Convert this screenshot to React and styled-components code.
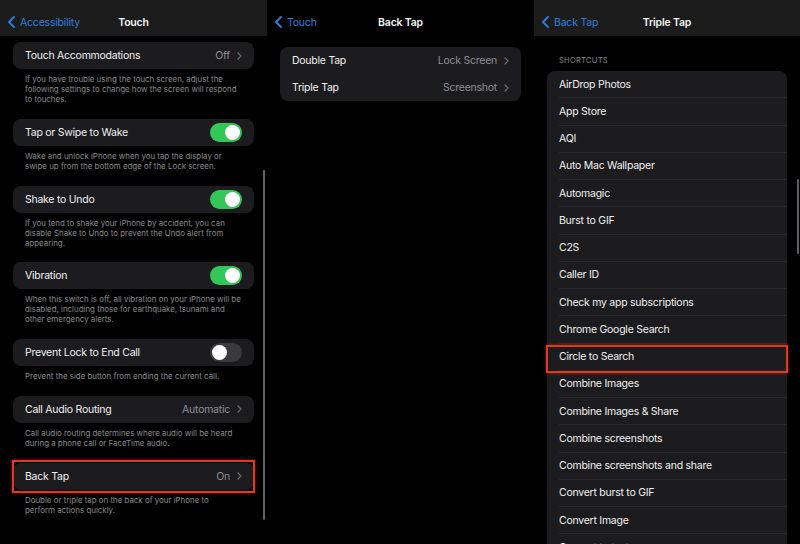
import React from 'react'
import styled, { createGlobalStyle } from 'styled-components'

const GlobalStyle = createGlobalStyle`
  html, body {
    margin: 0;
    padding: 0;
    background: #000;
  }
  body {
    font-family: Inter, "Noto Sans", "Liberation Sans", sans-serif;
    -webkit-font-smoothing: antialiased;
  }
`

const Screens = styled.div`
  display: flex;
  width: 800px;
  height: 544px;
  overflow: hidden;
  background: #000;
`

const Panel = styled.div`
  position: relative;
  display: flex;
  flex-direction: column;
  width: ${p => p.width}px;
  flex-shrink: 0;
  overflow: hidden;
`

const NavBar = styled.div`
  display: grid;
  grid-template-columns: 1fr auto 1fr;
  align-items: center;
  height: 36px;
  padding-top: 8px;
  box-sizing: border-box;
  background: ${p => (p.solid ? '#1c1c1d' : '#000')};
  flex-shrink: 0;
`

const BackLink = styled.div`
  display: flex;
  align-items: center;
  gap: 5px;
  padding-left: 8px;
  color: #2f7fdc;
  font-size: 10.5px;
  letter-spacing: -0.2px;
`

const Title = styled.div`
  color: #f4f4f4;
  font-size: 10.5px;
  font-weight: 600;
  letter-spacing: -0.2px;
`

const Content = styled.div`
  padding: ${p => p.top}px 13px 0;
`

const Card = styled.div`
  position: relative;
  background: #1c1c1e;
  border-radius: 8px;
  &::after {
    content: ${p => (p.marked ? "''" : 'none')};
    position: absolute;
    left: -1px;
    right: -1px;
    top: -3px;
    bottom: -3px;
    border: 2.5px solid #e2381d;
    box-shadow: 0 0 3px rgba(226, 56, 29, 0.6);
  }
`

const Row = styled.div`
  display: flex;
  align-items: center;
  justify-content: space-between;
  height: 27px;
  padding: 0 12px;
  color: #f0f0f0;
  font-size: 10.5px;
  letter-spacing: -0.25px;
`

const Value = styled.span`
  display: flex;
  align-items: center;
  gap: 7px;
  color: #8e8e93;
`

const Footer = styled.p`
  margin: 0;
  padding: 5px ${p => (p.narrow ? 40 : 12)}px 14.8px 12px;
  color: #8a8a8e;
  font-size: 7.9px;
  line-height: 10px;
`

const Track = styled.div`
  position: relative;
  width: 32px;
  height: 19px;
  border-radius: 10px;
  background: ${p => (p.on ? '#33c759' : '#3a3a3c')};
`

const Knob = styled.div`
  position: absolute;
  top: 2px;
  left: ${p => (p.on ? '15px' : '2px')};
  width: 15px;
  height: 15px;
  border-radius: 50%;
  background: #fff;
`

const ScrollIndicator = styled.div`
  position: absolute;
  right: ${p => p.right}px;
  top: ${p => p.top}px;
  width: 2.5px;
  height: ${p => p.length}px;
  border-radius: 2px;
  background: #5f5f63;
`

const SectionHeader = styled.div`
  padding: 0 12px 6px;
  color: #8a8a8e;
  font-size: 7.5px;
  letter-spacing: 0.3px;
`

const ListCard = styled.div`
  background: #1c1c1e;
  border-radius: 8px 8px 0 0;
`

const ShortcutRow = styled.div`
  position: relative;
  height: 27.25px;
  padding-left: 12px;
  color: #f0f0f0;
  font-size: 10.5px;
  letter-spacing: -0.25px;
  &::after {
    content: ${p => (p.marked ? "''" : 'none')};
    position: absolute;
    left: -1px;
    right: -1px;
    top: 1px;
    bottom: -2px;
    border: 2.5px solid #e2381d;
    box-shadow: 0 0 3px rgba(226, 56, 29, 0.6);
  }
`

const ShortcutLabel = styled.div`
  display: flex;
  align-items: center;
  height: 100%;
  box-sizing: border-box;
  border-bottom: 0.5px solid #2a2a2c;
`

const BackChevron = () => (
  <svg width="7" height="12" viewBox="0 0 7 12">
    <path d="M6 1L1 6l5 5" fill="none" stroke="#2f7fdc" strokeWidth="1.8" strokeLinecap="round" strokeLinejoin="round" />
  </svg>
)

const Chevron = () => (
  <svg width="5" height="8" viewBox="0 0 5 8">
    <path d="M1 1l3 3-3 3" fill="none" stroke="#6d6d72" strokeWidth="1.2" strokeLinecap="round" strokeLinejoin="round" />
  </svg>
)

const Toggle = ({ on }) => (
  <Track on={on}>
    <Knob on={on} />
  </Track>
)

const Nav = ({ back, title, solid }) => (
  <NavBar solid={solid}>
    <BackLink>
      <BackChevron />
      {back}
    </BackLink>
    <Title>{title}</Title>
    <div />
  </NavBar>
)

const touchSettings = [
  {
    label: 'Touch Accommodations',
    value: 'Off',
    note: 'If you have trouble using the touch screen, adjust the following settings to change how the screen will respond to touches.'
  },
  {
    label: 'Tap or Swipe to Wake',
    toggle: true,
    note: 'Wake and unlock iPhone when you tap the display or swipe up from the bottom edge of the Lock screen.'
  },
  {
    label: 'Shake to Undo',
    toggle: true,
    note: 'If you tend to shake your iPhone by accident, you can disable Shake to Undo to prevent the Undo alert from appearing.'
  },
  {
    label: 'Vibration',
    toggle: true,
    note: 'When this switch is off, all vibration on your iPhone will be disabled, including those for earthquake, tsunami and other emergency alerts.'
  },
  {
    label: 'Prevent Lock to End Call',
    toggle: false,
    note: 'Prevent the side button from ending the current call.'
  },
  {
    label: 'Call Audio Routing',
    value: 'Automatic',
    note: 'Call audio routing determines where audio will be heard during a phone call or FaceTime audio.'
  },
  {
    label: 'Back Tap',
    value: 'On',
    marked: true,
    narrow: true,
    note: 'Double or triple tap on the back of your iPhone to perform actions quickly.'
  }
]

const shortcuts = [
  'AirDrop Photos',
  'App Store',
  'AQI',
  'Auto Mac Wallpaper',
  'Automagic',
  'Burst to GIF',
  'C2S',
  'Caller ID',
  'Check my app subscriptions',
  'Chrome Google Search',
  'Circle to Search',
  'Combine Images',
  'Combine Images & Share',
  'Combine screenshots',
  'Combine screenshots and share',
  'Convert burst to GIF',
  'Convert Image',
  'Convert to text'
]

const TouchPanel = () => (
  <Panel width={267}>
    <Nav back="Accessibility" title="Touch" solid />
    <Content top={6}>
      {touchSettings.map(item => (
        <div key={item.label}>
          <Card marked={item.marked}>
            <Row>
              {item.label}
              {item.value !== undefined ? (
                <Value>
                  {item.value}
                  <Chevron />
                </Value>
              ) : (
                <Toggle on={item.toggle} />
              )}
            </Row>
          </Card>
          <Footer narrow={item.narrow}>{item.note}</Footer>
        </div>
      ))}
    </Content>
    <ScrollIndicator right={2} top={170} length={350} />
  </Panel>
)

const BackTapPanel = () => (
  <Panel width={267}>
    <Nav back="Touch" title="Back Tap" />
    <Content top={11}>
      <Card>
        <Row>
          Double Tap
          <Value>
            Lock Screen
            <Chevron />
          </Value>
        </Row>
        <Row>
          Triple Tap
          <Value>
            Screenshot
            <Chevron />
          </Value>
        </Row>
      </Card>
    </Content>
  </Panel>
)

const TripleTapPanel = () => (
  <Panel width={266}>
    <Nav back="Back Tap" title="Triple Tap" solid />
    <Content top={20}>
      <SectionHeader>SHORTCUTS</SectionHeader>
      <ListCard>
        {shortcuts.map(name => (
          <ShortcutRow key={name} marked={name === 'Circle to Search'}>
            <ShortcutLabel>{name}</ShortcutLabel>
          </ShortcutRow>
        ))}
      </ListCard>
    </Content>
    <ScrollIndicator right={1} top={179} length={75} />
  </Panel>
)

const App = () => (
  <>
    <GlobalStyle />
    <Screens>
      <TouchPanel />
      <BackTapPanel />
      <TripleTapPanel />
    </Screens>
  </>
)

export default App
